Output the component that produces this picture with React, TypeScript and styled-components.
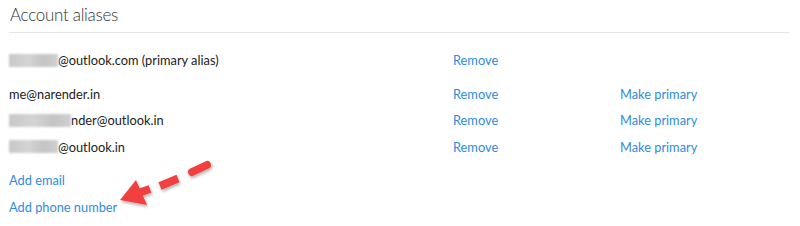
import { createGlobalStyle, styled } from 'styled-components';

const GlobalStyle = createGlobalStyle`
	body {
		margin: 0;
		background: #ffffff;
		font-family: 'Lato', 'Open Sans', sans-serif;
		color: #222222;
	}
`;

const aliases = [
	{ hidden: 49, text: '@outlook.com (primary alias)', primary: true },
	{ hidden: 0, text: 'me@narender.in', primary: false },
	{ hidden: 62, text: 'nder@outlook.in', primary: false },
	{ hidden: 49, text: '@outlook.in', primary: false },
];

const App = () => (
	<Page>
		<GlobalStyle />
		<Title>Account aliases</Title>
		<Divider />
		<AliasGrid>
			{aliases.map((alias, i) => (
				<Row key={i} $spaced={i === 1}>
					<Address>
						{alias.hidden > 0 && <Blur style={{ width: alias.hidden }} />}
						{alias.text}
					</Address>
					<Link>Remove</Link>
					{!alias.primary && <Link>Make primary</Link>}
				</Row>
			))}
		</AliasGrid>
		<Actions>
			<Link>Add email</Link>
			<Link>Add phone number</Link>
		</Actions>
		<Arrow width="110" height="60" viewBox="0 0 110 60">
			<defs>
				<filter id="sh" x="-20%" y="-20%" width="140%" height="160%">
					<feDropShadow dx="1" dy="2" stdDeviation="1.5" floodColor="#000" floodOpacity="0.3" />
				</filter>
			</defs>
			<g filter="url(#sh)" stroke="#f2413f" strokeWidth="8" strokeLinecap="round" fill="#f2413f">
				<line x1="97" y1="10" x2="82" y2="17" />
				<line x1="68" y1="23.5" x2="50" y2="31" strokeLinecap="butt" />
				<line x1="40" y1="34" x2="28" y2="38" strokeLinecap="butt" />
				<polygon points="10,45 26,25 37,50" stroke="none" />
			</g>
		</Arrow>
	</Page>
);

const Page = styled.div`
	position: relative;
	width: 800px;
	height: 226px;
	padding: 0 10px 0 9px;
	box-sizing: border-box;
	overflow: hidden;
`;

const Title = styled.h2`
	margin: 0;
	padding: 2px 0 0 1px;
	font-family: 'Lato', sans-serif;
	font-weight: 300;
	font-size: 17px;
	letter-spacing: -0.3px;
	line-height: 26px;
	color: #333333;
`;

const Divider = styled.div`
	height: 1px;
	background: #e6e6e6;
	margin-top: 4px;
`;

const AliasGrid = styled.div`
	display: flex;
	flex-direction: column;
	margin-top: 14px;
`;

const Row = styled.div<{ $spaced: boolean }>`
	display: grid;
	grid-template-columns: 444px 167px auto;
	align-items: center;
	height: 26.5px;
	margin-top: ${(p) => (p.$spaced ? '7px' : '0')};
	font-size: 12.8px;
`;

const Address = styled.span`
	display: flex;
	align-items: center;
	color: #222222;
`;

const Blur = styled.span`
	display: inline-block;
	height: 13px;
	background: linear-gradient(90deg, #c8c8c8, #d4d4d4 40%, #c4c4c4 70%, #cfcfcf);
	filter: blur(1px);
`;

const Link = styled.span`
	color: #2f8be0;
	font-size: 12.8px;
	cursor: pointer;
`;

const Actions = styled.div`
	display: flex;
	flex-direction: column;
	align-items: flex-start;
	gap: 10px;
	margin-top: 12px;
	line-height: 17px;
`;

const Arrow = styled.svg`
	position: absolute;
	left: 110px;
	top: 155px;
`;

export default App;
